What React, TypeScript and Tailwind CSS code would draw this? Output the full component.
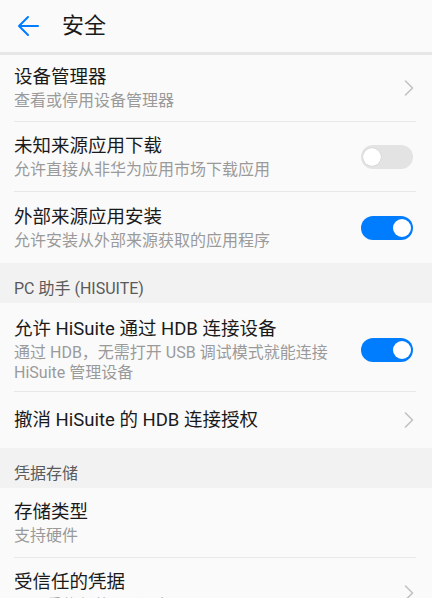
import React from "react";

const font = { fontFamily: 'Roboto, "Noto Sans CJK SC", sans-serif' };

function Chevron() {
  return (
    <svg width="10" height="16" viewBox="0 0 10 16" className="shrink-0 mr-[2px]">
      <polyline points="1.5,1 8.5,8 1.5,15" fill="none" stroke="#c2c2c2" strokeWidth="1.6" strokeLinecap="round" strokeLinejoin="round" />
    </svg>
  );
}

function Toggle({ on }: { on: boolean }) {
  return (
    <div
      className={`relative mr-[3px] w-[52px] h-[24px] rounded-full shrink-0 ${on ? "bg-[#007dff]" : "bg-[#e3e3e3]"}`}
    >
      <div
        className={`absolute top-[3px] w-[18px] h-[18px] rounded-full bg-white ${on ? "right-[2px]" : "left-[2px] shadow-[0_0_1px_rgba(0,0,0,0.25)]"}`}
      />
    </div>
  );
}

function Row({
  title,
  sub,
  right,
  h,
  border = true,
  extra = "",
}: {
  title: string;
  sub?: React.ReactNode;
  right: React.ReactNode;
  h: string;
  border?: boolean;
  extra?: string;
}) {
  return (
    <div className="pl-[14px] pr-[16px]">
      <div className={`flex items-center ${h} ${extra} ${border ? "border-b border-[#e8e8e8]" : ""}`}>
        <div className="flex-1 min-w-0 pr-[14px]">
          <div className="text-[18.5px] leading-[24px] text-[#1a1a1a]">{title}</div>
          {sub && <div className="mt-[2px] text-[16px] leading-[20px] text-[#9a9a9a]">{sub}</div>}
        </div>
        <div className="flex items-center justify-end">{right}</div>
      </div>
    </div>
  );
}

function Section({ label }: { label: string }) {
  return (
    <div className="h-[40px] bg-[#f2f2f2] pl-[14px] pt-[16px] text-[16px] leading-[20px] text-[#5a5a5a]">
      {label}
    </div>
  );
}

export default function App() {
  return (
    <div className="w-[432px] h-[598px] overflow-hidden bg-[#fafafa]" style={font}>
      <div className="h-[52px] flex items-center">
        <svg width="24" height="24" viewBox="0 0 24 24" className="ml-[16px]">
          <path d="M22 12H3M12 3L3 12l9 9" fill="none" stroke="#007dff" strokeWidth="2" strokeLinecap="round" strokeLinejoin="round" />
        </svg>
        <div className="ml-[22px] text-[22px] leading-[28px] text-[#1a1a1a]">安全</div>
      </div>
      <div className="h-[3px] bg-[#e6e6e6]" />
      <Row h="h-[67px]" title="设备管理器" sub="查看或停用设备管理器" right={<Chevron />} />
      <Row h="h-[70px]" title="未知来源应用下载" sub="允许直接从非华为应用市场下载应用" right={<Toggle on={false} />} />
      <Row h="h-[71px]" border={false} title="外部来源应用安装" sub="允许安装从外部来源获取的应用程序" right={<Toggle on={true} />} />
      <Section label="PC 助手 (HISUITE)" />
      <Row
        h="h-[89px]"
        extra="pt-[6px]"
        title="允许 HiSuite 通过 HDB 连接设备"
        sub="通过 HDB，无需打开 USB 调试模式就能连接 HiSuite 管理设备"
        right={<Toggle on={true} />}
      />
      <Row h="h-[56px]" border={false} title="撤消 HiSuite 的 HDB 连接授权" right={<Chevron />} />
      <Section label="凭据存储" />
      <Row h="h-[70px]" title="存储类型" sub="支持硬件" right={<span />} />
      <Row h="h-[70px]" title="受信任的凭据" sub="显示受信任的 CA 证书" right={<Chevron />} />
    </div>
  );
}
